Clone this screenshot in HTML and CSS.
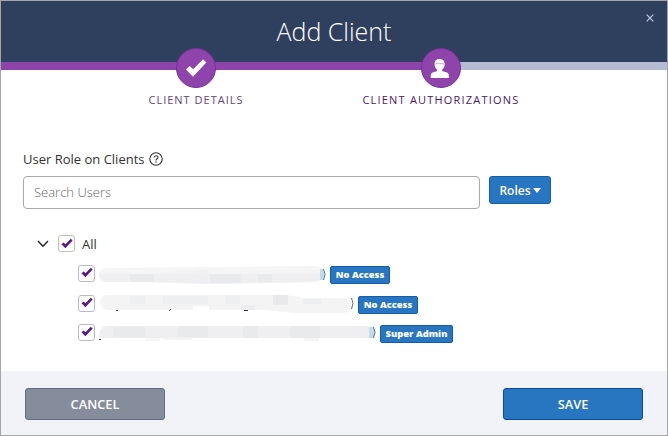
FILE: index.html
```html
<!DOCTYPE html>
<html lang="en">
<head>
<meta charset="utf-8">
<title>Add Client</title>
<link rel="stylesheet" href="styles.css">
</head>
<body>
<svg class="defs" width="0" height="0">
  <symbol id="check" viewBox="0 0 22 20"><path d="M1 11.5 4.8 8l3.4 3.3L18 1.2l3.3 3.4L8 18.7z"/></symbol>
</svg>
<main class="dialog">
  <header class="header"><h1>Add Client</h1><button class="close" aria-label="Close"><svg width="8" height="8" viewBox="0 0 8 8"><path d="M.7.7l6.6 6.6M7.3.7.7 7.3"/></svg></button></header>
  <nav class="progress">
    <div class="done"></div>
    <div class="step details"><span class="disc"><svg width="22" height="20"><use href="#check"/></svg></span><span class="label">CLIENT DETAILS</span></div>
    <div class="step auth"><span class="disc"><svg width="20" height="21" viewBox="0 0 20 21"><path d="M4.500 6C4.500 2.700 6.500 1 9.600 1s5.100 1.700 5.100 5c0 2.500-1 4.400-2.400 5.600v1.700c3 .6 6.200.8 6.500 3.700v3H.8v-3c.3-2.500 3.200-3.100 6.200-3.700v-1.700C5.500 10.400 4.500 8.400 4.500 6z"/><path class="hairline" d="M5 6Q9 4.600 14.200 6"/></svg></span><span class="label">CLIENT AUTHORIZATIONS</span></div>
  </nav>
  <section class="content">
    <div class="caption"><span>User Role on Clients</span><svg width="14" height="14" viewBox="0 0 14 14"><circle cx="7" cy="7" r="6.200"/><path d="M5.100 5.600C5.200 3.100 9 3.100 8.900 5.400 8.900 6.800 7 6.800 7 8.500M7 9.500v1.200"/></svg></div>
    <div class="search"><input class="field" placeholder="Search Users" aria-label="Search Users"><button class="roles"><span>Roles</span><i></i></button></div>
    <div class="tree">
      <div class="all"><svg class="chevron" width="12" height="8" viewBox="0 0 12 8"><path d="M1 1l5 5.300L11 1"/></svg><span class="box"><svg width="12" height="11"><use href="#check"/></svg></span><span>All</span></div>
      <div class="user"><span class="box"><svg width="12" height="11"><use href="#check"/></svg></span>
        <svg class="smudge" width="229" height="24" viewBox="0 0 229 24"><path fill="#f5f5f6" d="M8 6 216 4q8 0 8 4v8q-1 4-8 4l-106 2L50 20H8q-7-2-7-7 0-7 7-7z"/><path fill="#efeff1" d="M1 12h223v4q-1 4-8 4l-106 2L50 20H8q-7-2-7-8z"/><path fill="#e9eaec" d="M32 12h24v8H32zM112 12h31v9h-31zM160 12h14v8h-14z"/><path fill="#f0f0f2" d="M95 8h15v4H95z"/><path fill="#bcddf0" d="M222 7h3l1 5-1 6h-3z"/><path class="paren" d="M225.500 7q3 5 0 11"/></svg><span class="badge">No Access</span></div>
      <div class="user"><span class="box"><svg width="12" height="11"><use href="#check"/></svg></span>
        <svg class="smudge" width="257" height="24" viewBox="0 0 257 24"><path fill="#f4f4f5" d="M9 4H188l18 3h34q13 0 13 6 0 9-9 9h-48l-28-3H9q-7-2-7-8 1-7 7-7z"/><path fill="#eeeff0" d="M32 5h15v8H32zM65 5h45v8H65zM127 4h15v9h-15zM205 8h18v5h-18z"/><path fill="#e9e9ec" d="M175 4h13l2 1v9h-15z"/><path fill="#fff" d="M95 15h16v5H95z"/><path fill="#ececee" d="M143 14h14v5h-14z"/><path class="dots" d="M18 19.500h2M71 19.500l2-1M146 19.500h4"/><path class="paren" d="M253.500 7q3 5 0 11"/></svg><span class="badge">No Access</span></div>
      <div class="user"><span class="box"><svg width="12" height="11"><use href="#check"/></svg></span>
        <svg class="smudge" width="279" height="24" viewBox="0 0 279 24"><path fill="#efeff1" d="M8 5H267q8 0 9 3v6q-1 3-8 3H1q0-11 7-12z"/><path fill="#e9eaec" d="M15 6h32v10H15zM80 5h30v11H80zM145 5h15v12h-15zM192 5h30v12h-30z"/><path fill="#f5f5f6" d="M47 17h15v3H47zM65 17h29v2H65zM206 17h15v3h-15z"/><path fill="#bcddf0" d="M271 6h4l2 6-2 5h-4z"/><path class="dots" d="M1 18.500h2"/><path class="paren" d="M275.500 6q3 5 0 11"/></svg><span class="badge admin">Super Admin</span></div>
    </div>
  </section>
  <footer class="footer"><button class="action cancel">CANCEL</button><button class="action save">SAVE</button></footer>
</main>
</body>
</html>
```
FILE: styles.css
```css
* { box-sizing: border-box; }
body { margin: 0; font-family: "Open Sans", sans-serif; color: #333; }
button { font: inherit; padding: 0; border: 0; }
.defs { position: absolute; }
.dialog { width: 668px; height: 436px; border: 1px solid #a5a5a7; background: #fff; display: flex; flex-direction: column; }
.header { height: 61px; flex: none; background: #2f405e; position: relative; }
h1 { margin: 0; text-align: center; color: #fff; font-weight: 350; font-size: 25px; line-height: 61px; }
.close { position: absolute; right: 13px; top: 13px; width: 8px; height: 8px; background: none; display: flex; }
.close path { stroke: #c3cce7; stroke-width: 1.2; }
.progress { height: 8px; flex: none; background: #b4bbd2; position: relative; }
.done { width: 440px; height: 8px; background: #8d44a9; }
.step { position: absolute; top: -14px; display: flex; flex-direction: column; align-items: center; width: 180px; }
.details { left: 105px; }
.auth { left: 350px; }
.disc { width: 40px; height: 40px; border-radius: 50%; border: 1px solid #79309a; background: #8e44aa; display: flex; align-items: center; justify-content: center; fill: #fff; }
.auth .disc { padding-right: 2px; }
.hairline { fill: none; stroke: #b98acb; stroke-width: .7; }
.label { margin-top: 4px; font-size: 11px; line-height: 16px; letter-spacing: 1px; white-space: nowrap; color: #68427e; }
.auth .label { color: #4d1769; font-weight: 500; letter-spacing: 1.200px; }
.content { flex: 1; padding: 80px 22px 0; }
.caption { display: flex; align-items: center; gap: 4px; height: 18px; font-size: 13px; }
.caption svg { fill: none; stroke: #333; stroke-width: 1.1; }
.search { display: flex; gap: 9px; margin-top: 8px; }
.field { width: 457px; height: 33px; border: 1px solid #aaa; border-radius: 4px; padding: 0 10px 2px; font: 350 13px "Open Sans", sans-serif; background: #fff; }
.field::placeholder { color: #666; opacity: 1; }
.roles { width: 62px; height: 28px; border: 1px solid #145da8; border-radius: 3px; background: #2875c1; color: #fff; font-size: 12px; font-weight: 600; display: flex; align-items: center; justify-content: center; gap: 2px; }
.roles i { border: 4px solid transparent; border-top: 5px solid #fff; border-bottom: 0; }
.tree { padding-top: 25px; }
.all { display: flex; align-items: center; height: 19px; padding-left: 14px; font-size: 13px; }
.chevron { fill: none; stroke: #222; stroke-width: 1.4; margin-right: 9px; }
.box { width: 17px; height: 17px; flex: none; border: 1px solid #bdb7c9; border-radius: 3px; display: flex; align-items: center; justify-content: center; fill: #5b168b; }
.user .box { padding-bottom: 2px; }
.all .box { margin-right: 7px; border-color: #bac4b4; }
.user { display: flex; align-items: center; height: 29.500px; padding-left: 55px; }
.all + .user { margin-top: 6px; }
.smudge { margin-left: 3px; margin-right: 3px; flex: none; }
.paren { fill: none; stroke: #666b70; stroke-width: 1; }
.dots { fill: none; stroke: #333; stroke-width: 1; }
.badge { width: 60px; height: 18px; margin-top: 3px; border: 1px solid #145da8; border-radius: 2px; background: #2875c1; color: #fff; font-size: 9.400px; line-height: 15px; text-align: center; font-weight: 800; white-space: nowrap; }
.admin { width: 73px; }
.footer { height: 64px; flex: none; background: #f2f3f9; padding: 17px 24px 0; display: flex; justify-content: space-between; }
.action { width: 140px; height: 32px; border-radius: 3px; color: #fff; font-size: 12.800px; font-weight: 600; line-height: 29px; }
.cancel { background: #858d9c; border: 1px solid #686982; }
.save { background: #2875c0; border: 1px solid #0b48a0; }
```
